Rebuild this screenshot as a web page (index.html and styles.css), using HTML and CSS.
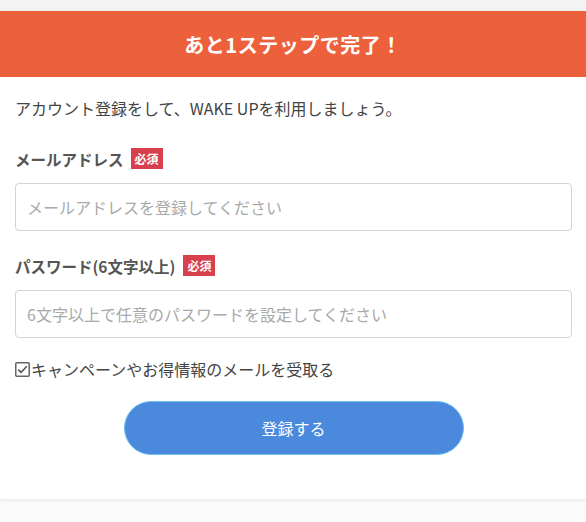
FILE: index.html
```html
<!DOCTYPE html>
<html lang="ja">
<head>
    <meta charset="UTF-8">
    <meta name="viewport" content="width=device-width, initial-scale=1.0">
    <title>WAKE UP - 会員登録</title>
    <link rel="stylesheet" href="styles.css">
</head>
<body>
    <div class="card">
        <div class="card-header">
            <h2>あと1ステップで完了！</h2>
        </div>

        <div class="card-body">
            <p class="intro">アカウント登録をして、WAKE UPを利用しましょう。</p>

            <!-- メールアドレス -->
            <div class="field">
                <label class="field-label" for="email">
                    メールアドレス
                    <span class="badge-required">必須</span>
                </label>
                <input class="text-input" type="email" id="email" placeholder="メールアドレスを登録してください">
            </div>

            <!-- パスワード -->
            <div class="field">
                <label class="field-label" for="password">
                    パスワード(6文字以上)
                    <span class="badge-required badge-wide">必須</span>
                </label>
                <input class="text-input" type="password" id="password" placeholder="6文字以上で任意のパスワードを設定してください">
            </div>

            <label class="check-row">
                <svg class="check-box" width="15" height="15" viewBox="0 0 15 15">
                    <rect x="0.75" y="0.75" width="13.5" height="13.5" rx="1" fill="#fff" stroke="#666" stroke-width="1.5"/>
                    <path d="M3.2 7.6 L6.1 10.4 L11.8 4.3" fill="none" stroke="#555" stroke-width="1.6"/>
                </svg>
                キャンペーンやお得情報のメールを受取る
            </label>

            <div class="actions">
                <button class="btn-submit" type="button">登録する</button>
            </div>
        </div>
    </div>
</body>
</html>
```

FILE: styles.css
```css
* {
    margin: 0;
    padding: 0;
    box-sizing: border-box;
}

body {
    font-family: "Noto Sans CJK JP", "Noto Sans", sans-serif;
    background: linear-gradient(180deg, #f3f3f3 0%, #fafafa 100%);
    min-height: 100vh;
    padding-top: 11px;
    color: #444;
}

.card {
    background: white;
    box-shadow: 0 1px 4px rgba(0,0,0,0.08);
}

.card-header {
    height: 66px;
    background: #ec613c;
    display: flex;
    align-items: center;
    justify-content: center;
}

.card-header h2 {
    color: white;
    font-size: 20px;
    font-weight: 700;
    letter-spacing: 0.5px;
}

.card-body {
    padding: 19px 14px 44px 15px;
}

.intro {
    font-size: 16px;
    line-height: 24px;
    margin-bottom: 28px;
}

.field {
    margin-bottom: 24px;
}

.field-label {
    display: flex;
    align-items: center;
    height: 21px;
    font-size: 15.5px;
    font-weight: 700;
    color: #555;
    margin-bottom: 14px;
}

.badge-required {
    display: inline-block;
    margin-left: 7px;
    padding: 0 4px;
    height: 21px;
    line-height: 21px;
    background: #d8404e;
    color: white;
    font-size: 12px;
    font-weight: 700;
}

.badge-wide {
    margin-left: 8px;
}

.text-input {
    display: block;
    width: 100%;
    height: 48px;
    padding: 0 11px;
    border: 1px solid #cfd4da;
    border-radius: 4px;
    font-family: inherit;
    font-size: 16px;
    color: #444;
}

.text-input::placeholder {
    color: #a9a9a9;
}

.check-row {
    display: flex;
    align-items: center;
    height: 22px;
    margin-top: -4px;
    font-size: 16px;
    color: #444;
}

.check-box {
    margin-right: 1px;
    flex-shrink: 0;
}

.actions {
    display: flex;
    justify-content: center;
    margin-top: 21px;
}

.btn-submit {
    width: 340px;
    height: 54px;
    border: 1px solid #6ec0ee;
    border-radius: 27px;
    background: #4a89dc;
    color: white;
    font-family: inherit;
    font-size: 16px;
    cursor: pointer;
}
```
